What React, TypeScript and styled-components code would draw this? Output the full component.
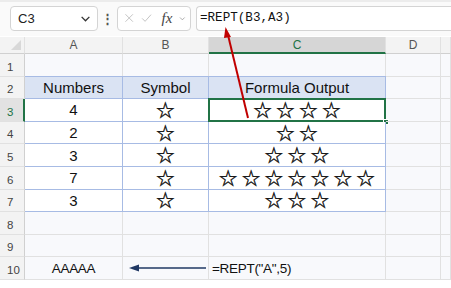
import React from "react";
import styled, { createGlobalStyle, css } from "styled-components";

const Global = createGlobalStyle`
  html, body {
    margin: 0;
    padding: 0;
    background: #ffffff;
  }
  body {
    font-family: "Liberation Sans", Arial, sans-serif;
    overflow: hidden;
  }
`;

const COLORS = {
  grid: "#e1e1e1",
  tableBorder: "#a7bbe4",
  tableHead: "#dae3f3",
  headerBg: "#f3f3f3",
  headerActive: "#d6d6d6",
  green: "#217346",
  sheetBg: "#f8f9fc",
  red: "#c00000",
  navy: "#203864",
};

const Page = styled.div`
  position: relative;
  width: 451px;
  height: 288px;
  background: #ffffff;
`;

const FormulaBar = styled.div`
  display: flex;
  align-items: center;
  height: 36px;
  padding-left: 10px;
  box-sizing: border-box;
  background: linear-gradient(#ececec 0, #ececec 2px, #fafafa 2px);
`;

const Box = styled.div`
  display: flex;
  align-items: center;
  height: 25px;
  box-sizing: border-box;
  background: #ffffff;
  border: 1px solid #d4d4d4;
  border-radius: 4px;
`;

const NameBox = styled(Box)`
  width: 88px;
  padding: 0 6px 0 7px;
  justify-content: space-between;
  font-size: 13px;
  color: #222;
`;

const Dots = styled.div`
  width: 19px;
  text-align: center;
  font-size: 13px;
  font-weight: bold;
  color: #555;
`;

const FxBox = styled(Box)`
  width: 74px;
  padding: 0 4px 0 6px;
  gap: 7px;
  color: #b8b8b8;
`;

const Fx = styled.span`
  font-family: "Liberation Serif", serif;
  font-style: italic;
  font-size: 15px;
  color: #444;
  margin-left: 2px;
`;

const FormulaInput = styled(Box)`
  flex: 1;
  margin-left: 5px;
  border-right: none;
  border-radius: 4px 0 0 4px;
  padding-left: 3px;
  font-family: "Liberation Mono", "DejaVu Sans Mono", monospace;
  font-size: 12.6px;
  color: #111;
`;

const Sheet = styled.div`
  display: grid;
  grid-template-columns: 25px 98px 86px 177px 55px 1fr;
  grid-template-rows: 17px repeat(10, 22.6px);
  margin-top: 1px;
  background: ${COLORS.sheetBg};
`;

const Corner = styled.div`
  background: ${COLORS.headerBg};
  border-right: 1px solid ${COLORS.grid};
  border-bottom: 1px solid #d0d0d0;
  position: relative;
  &::after {
    content: "";
    position: absolute;
    right: 3px;
    bottom: 3px;
    border-left: 10px solid transparent;
    border-bottom: 10px solid #d8d8d8;
  }
`;

const ColHead = styled.div<{ $active?: boolean }>`
  display: flex;
  align-items: center;
  justify-content: center;
  font-size: 12px;
  color: #555;
  background: ${COLORS.headerBg};
  border-right: 1px solid ${COLORS.grid};
  border-bottom: 1px solid #d0d0d0;
  ${(p) =>
    p.$active &&
    css`
      background: ${COLORS.headerActive};
      color: ${COLORS.green};
      border-bottom: 2px solid ${COLORS.green};
    `}
`;

const RowHead = styled.div<{ $active?: boolean }>`
  display: flex;
  align-items: flex-end;
  padding: 0 0 3px 7px;
  box-sizing: border-box;
  font-size: 11.5px;
  color: #444;
  background: ${COLORS.headerBg};
  border-right: 1px solid #d0d0d0;
  border-bottom: 1px solid ${COLORS.grid};
  ${(p) =>
    p.$active &&
    css`
      background: #e2e2e2;
      color: ${COLORS.green};
      border-right: 2px solid ${COLORS.green};
    `}
`;

type Edge = { t?: boolean; r?: boolean; b?: boolean };

const Cell = styled.div<{
  $table?: Edge;
  $head?: boolean;
  $body?: boolean;
  $align?: "center" | "left";
  $stars?: boolean;
  $selected?: boolean;
}>`
  position: relative;
  display: flex;
  align-items: center;
  justify-content: ${(p) => (p.$align === "left" ? "flex-start" : "center")};
  padding-left: ${(p) => (p.$align === "left" ? "3px" : "0")};
  box-sizing: border-box;
  border-right: 1px solid ${COLORS.grid};
  border-bottom: 1px solid ${COLORS.grid};
  font-size: 15px;
  color: #111;
  white-space: nowrap;
  background: ${(p) => (p.$head ? COLORS.tableHead : p.$body ? "#ffffff" : "transparent")};
  ${(p) => p.$table?.r && css`border-right-color: ${COLORS.tableBorder};`}
  ${(p) => p.$table?.b && css`border-bottom-color: ${COLORS.tableBorder};`}
  ${(p) => p.$table?.t && css`border-top: 1px solid ${COLORS.tableBorder}; margin-top: -1px;`}
  ${(p) =>
    p.$stars &&
    css`
      font-family: "DejaVu Sans", sans-serif;
      font-size: 22px;
      letter-spacing: 3.2px;
      padding-left: 3px;
      padding-top: 1px;
      color: #1a1a1a;
      -webkit-text-stroke: 0.45px #1a1a1a;
    `}
  ${(p) =>
    p.$selected &&
    css`
      &::before {
        content: "";
        position: absolute;
        inset: -1px -1px -1px -1px;
        border: 2px solid ${COLORS.green};
        pointer-events: none;
      }
      &::after {
        content: "";
        position: absolute;
        right: -4px;
        bottom: -4px;
        width: 6px;
        height: 6px;
        background: ${COLORS.green};
        border: 1px solid #ffffff;
        box-sizing: border-box;
      }
    `}
`;

const Note = styled.span`
  font-size: 13.5px;
  color: #111;
  letter-spacing: -0.3px;
`;

const Overlay = styled.svg`
  position: absolute;
  left: 0;
  top: 0;
  pointer-events: none;
`;

const Chevron = ({ size = 10, color = "#444" }: { size?: number; color?: string }) => (
  <svg width={size} height={size} viewBox="0 0 10 10">
    <path d="M1.5 3.5 L5 7 L8.5 3.5" fill="none" stroke={color} strokeWidth="1.2" />
  </svg>
);

const counts = [4, 2, 3, 7, 3];

export default function App() {
  const star = "☆";
  return (
    <Page>
      <Global />
      <FormulaBar>
        <NameBox>
          <span>C3</span>
          <Chevron size={11} color="#333" />
        </NameBox>
        <Dots>⋮</Dots>
        <FxBox>
          <svg width="14" height="14" viewBox="0 0 14 14">
            <path d="M2 2 L12 12 M12 2 L2 12" stroke="#bcbcbc" strokeWidth="1.2" />
          </svg>
          <svg width="15" height="14" viewBox="0 0 15 14">
            <path d="M1.5 7.5 L5.5 11.5 L13.5 2.5" fill="none" stroke="#bcbcbc" strokeWidth="1.2" />
          </svg>
          <Fx>fx</Fx>
          <Chevron size={9} color="#999" />
        </FxBox>
        <FormulaInput>=REPT(B3,A3)</FormulaInput>
      </FormulaBar>

      <Sheet>
        <Corner />
        <ColHead>A</ColHead>
        <ColHead>B</ColHead>
        <ColHead $active>C</ColHead>
        <ColHead>D</ColHead>
        <ColHead />

        <RowHead>1</RowHead>
        <Cell />
        <Cell />
        <Cell />
        <Cell />
        <Cell />

        <RowHead>2</RowHead>
        <Cell $head $table={{ r: true, b: true, t: true }}>Numbers</Cell>
        <Cell $head $table={{ r: true, b: true, t: true }}>Symbol</Cell>
        <Cell $head $table={{ r: true, b: true, t: true }}>Formula Output</Cell>
        <Cell />
        <Cell />

        {counts.map((n, i) => (
          <React.Fragment key={i}>
            <RowHead $active={i === 0}>{i + 3}</RowHead>
            <Cell $body $table={{ r: true, b: true }}>{n}</Cell>
            <Cell $body $stars $table={{ r: true, b: true }}>{star}</Cell>
            <Cell $body $stars $selected={i === 0} $table={{ r: true, b: true }}>
              {star.repeat(n)}
            </Cell>
            <Cell />
            <Cell />
          </React.Fragment>
        ))}

        <RowHead>8</RowHead>
        <Cell />
        <Cell />
        <Cell />
        <Cell />
        <Cell />

        <RowHead>9</RowHead>
        <Cell />
        <Cell />
        <Cell />
        <Cell />
        <Cell />

        <RowHead>10</RowHead>
        <Cell>
          <Note>AAAAA</Note>
        </Cell>
        <Cell />
        <Cell $align="left">
          <Note>=REPT("A",5)</Note>
        </Cell>
        <Cell />
        <Cell />
      </Sheet>

      <Overlay width="451" height="288" viewBox="0 0 451 288">
        <line x1="248" y1="118" x2="228" y2="35" stroke={COLORS.red} strokeWidth="2" />
        <path d="M225.5 27 L231 37 L224 38 Z" fill={COLORS.red} />
        <line x1="206" y1="268" x2="137" y2="268" stroke={COLORS.navy} strokeWidth="1.6" />
        <path d="M129 268 L139 264.5 L139 271.5 Z" fill={COLORS.navy} />
      </Overlay>
    </Page>
  );
}
